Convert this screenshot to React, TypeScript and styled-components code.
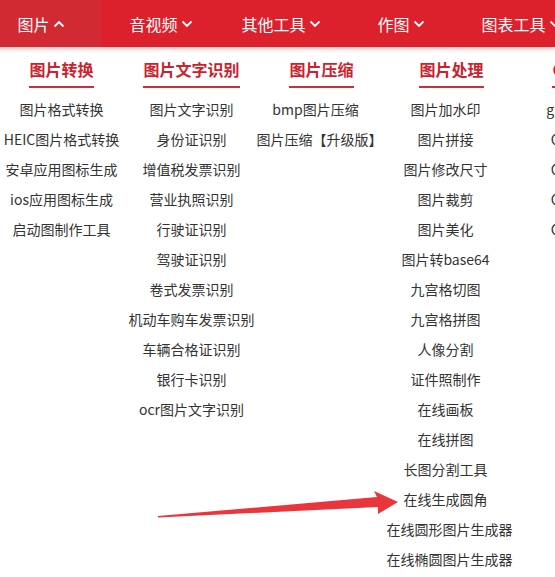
import styled, { createGlobalStyle } from "styled-components";

const GlobalStyle = createGlobalStyle`
  html,
  body {
    margin: 0;
    padding: 0;
    background: #fff;
    overflow: hidden;
  }

  body {
    font-family: "Noto Sans CJK SC", "Microsoft YaHei", sans-serif;
    color: #333;
  }
`;

type NavItemInfo = { label: string; open?: boolean };

const NAV_ITEMS: NavItemInfo[] = [
  { label: "图片", open: true },
  { label: "音视频" },
  { label: "其他工具" },
  { label: "作图" },
  { label: "图表工具" },
];

type Group = { title: string; items: string[]; shift?: boolean };

const GROUPS: Group[] = [
  {
    title: "图片转换",
    items: [
      "图片格式转换",
      "HEIC图片格式转换",
      "安卓应用图标生成",
      "ios应用图标生成",
      "启动图制作工具",
    ],
  },
  {
    title: "图片文字识别",
    items: [
      "图片文字识别",
      "身份证识别",
      "增值税发票识别",
      "营业执照识别",
      "行驶证识别",
      "驾驶证识别",
      "卷式发票识别",
      "机动车购车发票识别",
      "车辆合格证识别",
      "银行卡识别",
      "ocr图片文字识别",
    ],
  },
  {
    title: "图片压缩",
    shift: true,
    items: ["bmp图片压缩", "图片压缩【升级版】"],
  },
  {
    title: "图片处理",
    shift: true,
    items: [
      "图片加水印",
      "图片拼接",
      "图片修改尺寸",
      "图片裁剪",
      "图片美化",
      "图片转base64",
      "九宫格切图",
      "九宫格拼图",
      "人像分割",
      "证件照制作",
      "在线画板",
      "在线拼图",
      "长图分割工具",
      "在线生成圆角",
      "在线圆形图片生成器",
      "在线椭圆图片生成器",
    ],
  },
  {
    title: "GIF工具",
    shift: true,
    items: ["gif转视频", "GIF倒放", "GIF裁剪", "GIF拆分", "GIF合成"],
  },
];

// small chevron drawn next to each nav label
const Chevron = ({ up }: { up?: boolean }) => (
  <ChevronSvg viewBox="0 0 12 8" width="12" height="8">
    <polyline
      points={up ? "1.5,6.5 6,2 10.5,6.5" : "1.5,1.5 6,6 10.5,1.5"}
      fill="none"
      stroke="#fff"
      strokeWidth="1.8"
    />
  </ChevronSvg>
);

const App = () => {
  return (
    <>
      <GlobalStyle />
      <Page>
        <NavBar>
          {NAV_ITEMS.map((item) => (
            <NavItem key={item.label} $active={!!item.open}>
              {item.label}
              <Chevron up={item.open} />
            </NavItem>
          ))}
        </NavBar>

        <Menu>
          {GROUPS.map((group) => (
            <Column key={group.title}>
              <Heading>{group.title}</Heading>
              <List $shift={!!group.shift}>
                {group.items.map((label) => (
                  <Item key={label}>{label}</Item>
                ))}
              </List>
            </Column>
          ))}
        </Menu>

        <Arrow viewBox="0 0 555 577" width="555" height="577">
          <polygon
            points="158,516 377,497 374,491 398,502 378,514 378,507 158,517.5"
            fill="#e9353b"
          />
        </Arrow>
      </Page>
    </>
  );
};

const Page = styled.div`
  position: relative;
  width: 555px;
  height: 577px;
  overflow: hidden;
`;

const NavBar = styled.div`
  display: flex;
  height: 47px;
  margin-left: -19px;
  background-color: #dc202c;
  box-shadow: 0 2px 4px rgba(120, 0, 0, 0.25);
  position: relative;
  z-index: 1;
`;

const NavItem = styled.div<{ $active: boolean }>`
  flex-shrink: 0;
  width: 120px;
  display: flex;
  align-items: center;
  justify-content: center;
  gap: 3px;

  color: #fff;
  font-size: 16px;
  white-space: nowrap;
  background-color: ${({ $active }) => ($active ? "#d22a33" : "transparent")};
`;

const ChevronSvg = styled.svg`
  display: block;
  margin-top: 1px;
`;

const Menu = styled.div`
  display: flex;
  margin-left: -3.5px;
`;

const Column = styled.div`
  flex-shrink: 0;
  width: 130px;
  display: flex;
  flex-direction: column;
  align-items: center;
`;

const Heading = styled.div`
  margin-top: 11px;
  padding-bottom: 6px;
  border-bottom: 2px solid #c9303a;

  color: #cc222d;
  font-size: 16px;
  font-weight: bold;
  line-height: 22px;
  white-space: nowrap;
`;

const List = styled.div<{ $shift: boolean }>`
  align-self: stretch;
  margin-top: 6px;
  padding-right: ${({ $shift }) => ($shift ? "12px" : "0")};
  text-align: center;
`;

const Item = styled.div`
  height: 30px;
  line-height: 30px;
  font-size: 14px;
  color: #333;
  white-space: nowrap;
`;

const Arrow = styled.svg`
  position: absolute;
  top: 0;
  left: 0;
  pointer-events: none;
`;

export default App;
